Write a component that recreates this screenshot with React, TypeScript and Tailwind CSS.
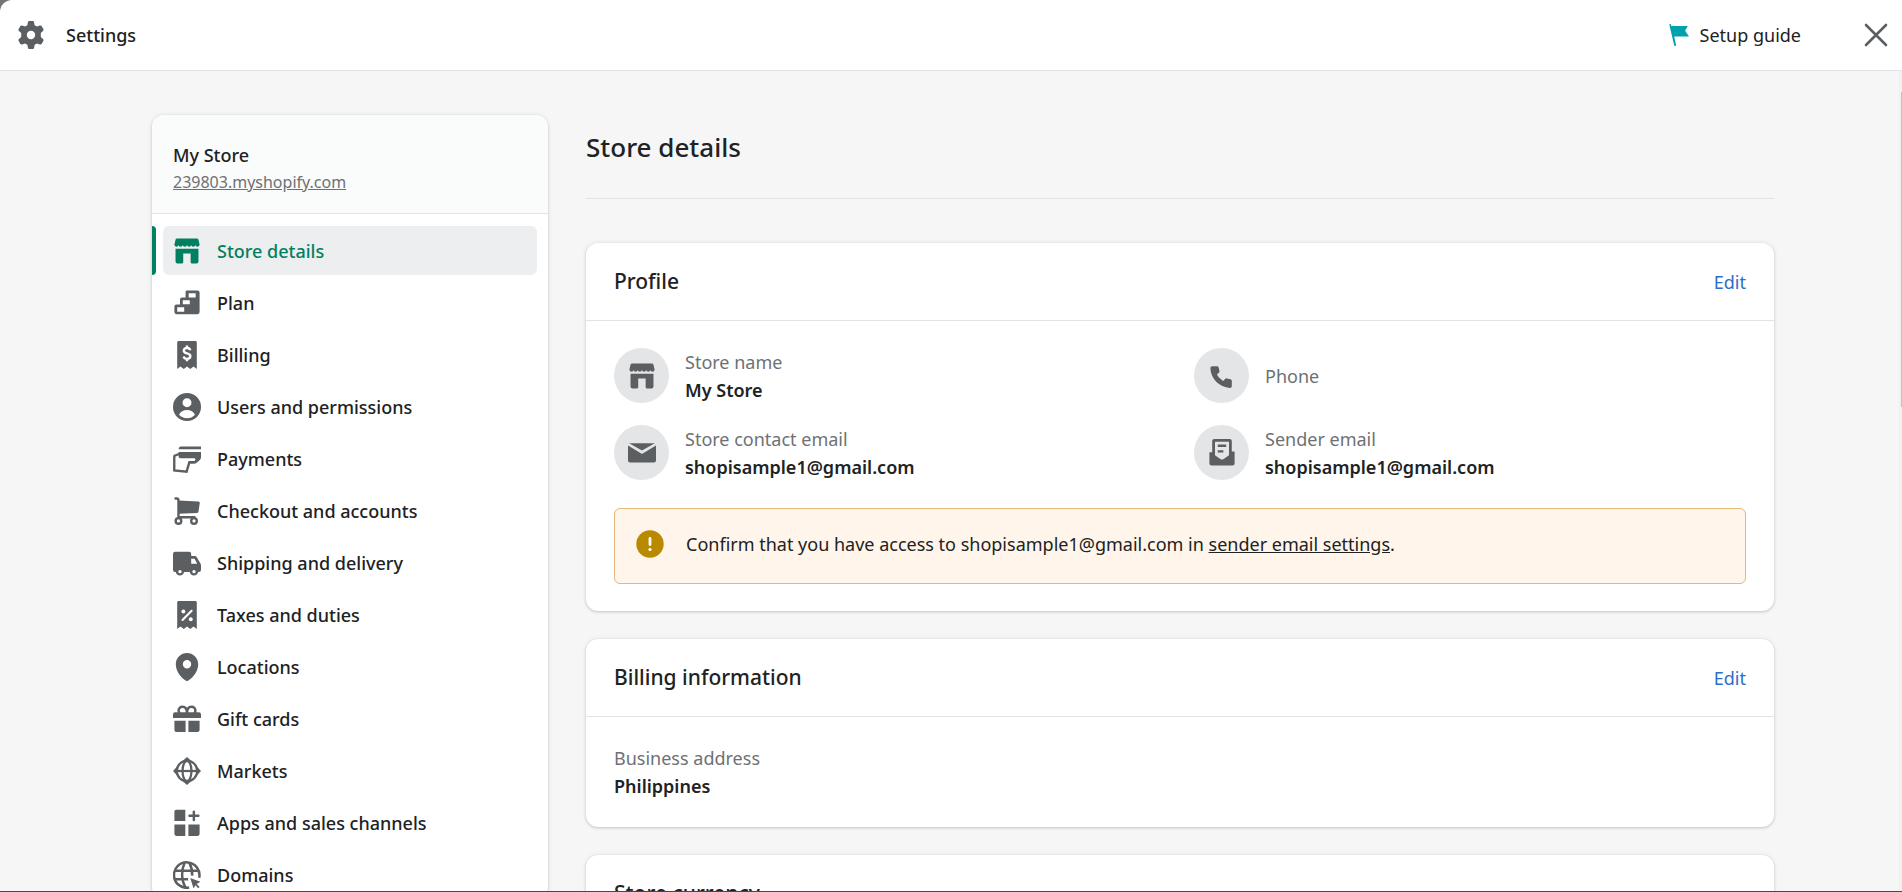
import type { ReactNode } from 'react'

const ICONS: Record<string, ReactNode> = {
  store: (
    <>
      <path d="M3 1h14a1.2 1.2 0 0 1 1.2 1L19 5.4c0 .9-.7 1.5-1.5 1.5S16 6.300 16 5.500c0 .8-.7 1.400-1.500 1.400S13 6.300 13 5.500c0 .8-.7 1.400-1.500 1.400S10 6.300 10 5.500c0 .8-.7 1.400-1.500 1.400S7 6.300 7 5.500c0 .8-.7 1.400-1.500 1.400S4 6.300 4 5.500c0 .8-.7 1.400-1.500 1.400S1 6.300 1 5.400L1.800 2A1.200 1.200 0 0 1 3 1z" />
      <path d="M1.800 8.400h16.400v9.100a1.400 1.400 0 0 1-1.400 1.400h-3.400a.8.800 0 0 1-.8-.8v-6.300H7.300v6.300a.8.800 0 0 1-.8.800H3.200a1.400 1.400 0 0 1-1.400-1.400z" />
    </>
  ),
  plan: (
    <path
      fillRule="evenodd"
      d="M10 1h7.500A1.500 1.500 0 0 1 19 2.500v14a1.500 1.500 0 0 1-1.500 1.500h-15A1.500 1.500 0 0 1 1 16.500v-4A1.500 1.500 0 0 1 2.500 11H5V7.500A1.500 1.500 0 0 1 6.500 6H9V2a1 1 0 0 1 1-1zm1.200 2v3h5V3zM7 8v2.900h5V8zm-4 5v3.200h5V13z"
    />
  ),
  billing: (
    <>
      <path d="M4 0h12a1 1 0 0 1 1 1v19l-2.300-1.800L12.300 20 10 18.200 7.700 20l-2.400-1.800L3 20V1a1 1 0 0 1 1-1z" />
      <path
        d="M12.300 6.600C12 5.500 11.100 5 10 5c-1.300 0-2.300.8-2.300 1.900 0 2.600 4.700 1.300 4.700 3.900 0 1.200-1 2-2.400 2-1.200 0-2.100-.6-2.400-1.700M10 3.300V5m0 7.800v1.700"
        fill="none"
        stroke="#fff"
        strokeWidth="1.700"
      />
    </>
  ),
  users: (
    <path
      fillRule="evenodd"
      d="M10 0a10 10 0 1 0 0 20 10 10 0 0 0 0-20zm0 3.700a3.200 3.200 0 1 1 0 6.400 3.200 3.200 0 0 1 0-6.400zM10 18c-2.300 0-4.300-1-5.700-2.500.9-2.100 3.100-3.300 5.700-3.300s4.800 1.200 5.700 3.300A7.700 7.700 0 0 1 10 18z"
    />
  ),
  payments: (
    <>
      <path d="M5.500 1H20v2H4c.1-1.100.7-2 1.500-2z" />
      <path d="M4 5h16v3.500c0 1-.4 1.900-1.200 2.500l-1.900 1.600c-.4.400-1 .6-1.600.6h-3v-1.800h2.500c.7 0 1.200-.5 1.200-1.100 0-.5-.5-.8-1.100-.8H5.500C4.600 9.500 4 8.900 4 8z" />
      <path d="M5 6.100L1.600 7.500a1 1 0 0 0-.7.900v9.700l8.800.9 2-6.700h3.600" fill="none" stroke="currentColor" strokeWidth="1.700" />
    </>
  ),
  checkout: (
    <>
      <path d="M4 2.500l14 .8c.8 0 1.200.5 1.100 1.200l-.9 6a1.200 1.200 0 0 1-1.100 1L4 12z" />
      <path
        d="M1.800 1.100h.8c.8 0 1.300.5 1.300 1.300v12.100h11.500"
        fill="none"
        stroke="currentColor"
        strokeWidth="1.700"
        strokeLinecap="round"
      />
      <circle cx="3.900" cy="17.100" r="2" fill="none" stroke="currentColor" strokeWidth="1.700" />
      <circle cx="15" cy="17.100" r="2" fill="none" stroke="currentColor" strokeWidth="1.700" />
    </>
  ),
  shipping: (
    <path
      fillRule="evenodd"
      d="M1.500 2h10A1.500 1.500 0 0 1 13 3.500V5h2.600c.5 0 1 .3 1.300.8l2.700 4.500c.3.500.4 1 .4 1.500V15a1.500 1.500 0 0 1-1.500 1.500h-.6a3 3 0 0 1-5.900 0H7.900a3 3 0 0 1-5.900 0h-.5A1.500 1.500 0 0 1 0 15V3.500A1.500 1.500 0 0 1 1.500 2zM13 7v3.500h4.300L15.400 7zM5 15a1.200 1.200 0 1 0 0 2.400A1.200 1.200 0 0 0 5 15zm10 0a1.200 1.200 0 1 0 0 2.400A1.200 1.200 0 0 0 15 15z"
    />
  ),
  taxes: (
    <>
      <path d="M4 0h12a1 1 0 0 1 1 1v19l-2.300-1.800L12.300 20 10 18.200 7.700 20l-2.400-1.800L3 20V1a1 1 0 0 1 1-1z" />
      <path d="M13.300 7l-6.500 6.500" stroke="#fff" strokeWidth="1.500" strokeLinecap="round" />
      <circle cx="7.400" cy="7.500" r="1.400" fill="#fff" />
      <circle cx="12.700" cy="13" r="1.400" fill="#fff" />
    </>
  ),
  locations: (
    <path
      fillRule="evenodd"
      d="M10 0C5.600 0 2 3.500 2 8c0 6.500 5.800 10.900 7.300 11.800.4.300 1 .3 1.400 0C12.200 18.900 18 14.500 18 8c0-4.500-3.600-8-8-8zm0 5a3 3 0 1 1 0 6 3 3 0 0 1 0-6z"
    />
  ),
  gift: (
    <>
      <path
        d="M10 5.800C10 3 8.800 1.200 6.800 1.200 5.200 1.200 4 2.400 4 4c0 .8.300 1.400.8 1.800M10 5.800c0-2.800 1.200-4.600 3.200-4.600 1.600 0 2.800 1.200 2.800 2.800 0 .8-.3 1.400-.8 1.800"
        fill="none"
        stroke="currentColor"
        strokeWidth="1.800"
      />
      <path d="M1.500 5.200h17A1.500 1.500 0 0 1 20 6.700v2.600H0V6.700a1.500 1.500 0 0 1 1.500-1.500zM1 11.200h8v8.100H2.500A1.500 1.500 0 0 1 1 17.800zM11 11.200h8v6.600a1.500 1.500 0 0 1-1.500 1.500H11z" />
    </>
  ),
  markets: (
    <>
      <g fill="none" stroke="currentColor" strokeWidth="1.600">
        <circle cx="10" cy="10" r="7.300" />
        <ellipse cx="10" cy="10" rx="3.200" ry="7.300" />
        <path d="M2 10h16" />
      </g>
      <path d="M10 0l3.600 3.300H6.400zM10 20l3.600-3.300H6.400zM0 10l3.300-3.600v7.200zM20 10l-3.300-3.600v7.200z" />
    </>
  ),
  apps: (
    <path d="M2.300.5H8.800v8.100H1V1.800A1.300 1.300 0 0 1 2.300.5zM1 11h7.800v8.200H2.300A1.300 1.300 0 0 1 1 17.900zM11 11h8v6.900a1.300 1.300 0 0 1-1.300 1.300H11zM14 1.900a.9.900 0 0 1 1.800 0V4h2.300a.9.900 0 0 1 0 1.800h-2.300v2.100a.9.900 0 0 1-1.800 0V5.800h-2.200a.9.900 0 0 1 0-1.800H14z" />
  ),
  domains: (
    <>
      <g fill="none" stroke="currentColor" strokeWidth="1.800">
        <path d="M18.700 12A9.100 9.100 0 1 0 11.500 19" />
        <path d="M1.500 7h17M1.500 13h9.300M8.300 1.200C6 6 5.600 13.500 9 18.900M11.700 1.200c1.500 3 2.200 6 2 9.300" />
      </g>
      <path d="M12.300 12.200l7.300 2.600-2.700 1.600 2.100 2.100-1 1-2-2.100-1.300 2.300z" />
    </>
  ),
  gear: (
    <path
      fillRule="evenodd"
      d="M8.900 0h2.200c.6 0 1 .4 1.100.9l.4 2.100 1.700 1 2-.7c.5-.2 1.100 0 1.400.5l1.100 1.900c.3.500.2 1.100-.2 1.400L17 8.600v2.800l1.600 1.500c.4.300.5.900.2 1.400l-1.100 1.900c-.3.500-.9.700-1.400.5l-2-.7-1.700 1-.4 2.100c-.1.500-.5.900-1.100.9H8.900c-.6 0-1-.4-1.100-.9L7.400 17l-1.700-1-2 .7c-.5.200-1.100 0-1.400-.5l-1.100-1.900c-.3-.5-.2-1.100.2-1.400L3 11.400V8.600L1.400 7.100c-.4-.3-.5-.9-.2-1.400l1.100-1.900c.3-.5.9-.7 1.400-.5l2 .7 1.700-1 .4-2.100C7.900.4 8.300 0 8.900 0zM10 7a3 3 0 1 0 0 6 3 3 0 0 0 0-6z"
    />
  ),
  mail: (
    <>
      <path d="M.8 3h18.400L10 8.300z" />
      <path d="M0 4.700l9.500 5.600c.3.200.7.200 1 0L20 4.700v10.600a1.500 1.500 0 0 1-1.500 1.500h-17A1.500 1.500 0 0 1 0 15.300z" />
    </>
  ),
  phone: (
    <path d="M3.100 3h3.300c.6 0 1.100.4 1.200 1l.6 2.500c.1.500 0 .9-.4 1.200L6.400 9c1 1.900 2.500 3.500 4.500 4.500l1.300-1.400c.3-.4.800-.5 1.200-.4l2.700.6c.5.100.9.600.9 1.200v3.900c0 .7-.6 1.200-1.300 1.100C7.900 18 1.900 12 1.700 4.300 1.700 3.600 2.400 3 3.100 3z" />
  ),
  inbox: (
    <path
      fillRule="evenodd"
      d="M4.500 0h11A1.500 1.500 0 0 1 17 1.500V9h2v8.500a1.500 1.500 0 0 1-1.500 1.500h-15A1.500 1.500 0 0 1 1 17.500V9.500h2v-8A1.500 1.500 0 0 1 4.500 0zM5 2v9.600l3.800 2.700c.7.500 1.700.5 2.400 0l3.800-2.700V2zm2 2h6v1.700H7zm0 4h4v1.700H7z"
    />
  ),
}

const NAV = [
  { icon: 'store', label: 'Store details', active: true },
  { icon: 'plan', label: 'Plan' },
  { icon: 'billing', label: 'Billing' },
  { icon: 'users', label: 'Users and permissions' },
  { icon: 'payments', label: 'Payments' },
  { icon: 'checkout', label: 'Checkout and accounts' },
  { icon: 'shipping', label: 'Shipping and delivery' },
  { icon: 'taxes', label: 'Taxes and duties' },
  { icon: 'locations', label: 'Locations' },
  { icon: 'gift', label: 'Gift cards' },
  { icon: 'markets', label: 'Markets' },
  { icon: 'apps', label: 'Apps and sales channels' },
  { icon: 'domains', label: 'Domains' },
]

const PROFILE = [
  { icon: 'store', label: 'Store name', value: 'My Store' },
  { icon: 'phone', label: 'Phone' },
  { icon: 'mail', label: 'Store contact email', value: 'shopisample1@gmail.com' },
  { icon: 'inbox', label: 'Sender email', value: 'shopisample1@gmail.com' },
]

const CARD = 'rounded-xl bg-white shadow-[0_0_5px_rgba(23,24,24,0.08),0_1px_3px_rgba(0,0,0,0.16)]'

function Icon({ name }: { name: string }) {
  return (
    <svg viewBox="0 0 20 20" fill="currentColor" className="size-7 shrink-0" aria-hidden="true">
      {ICONS[name]}
    </svg>
  )
}

function Card({ title, children }: { title: string; children?: ReactNode }) {
  return (
    <section className={CARD}>
      <div className="flex h-[78px] items-center justify-between border-b border-[#e1e3e5] px-7">
        <h2 className="text-[21px] font-medium">{title}</h2>
        <button type="button" className="text-[#2c6ecb]">Edit</button>
      </div>
      {children}
    </section>
  )
}

function Sidebar() {
  return (
    <aside className={`w-[396px] shrink-0 overflow-hidden ${CARD}`}>
      <div className="border-b border-[#e1e3e5] bg-[#fafbfb] px-[21px] pt-[26px] pb-[18px]">
        <div className="leading-7 font-medium">My Store</div>
        <a href="#store" className="block text-base leading-[26px] text-[#6d7175] underline">
          239803.myshopify.com
        </a>
      </div>
      <nav className="flex flex-col gap-[3px] pt-3">
        {NAV.map(({ icon, label, active }) => (
          <div key={label} className="relative px-[11px]">
            {active && <span className="absolute inset-y-0 left-0 w-1 rounded-r bg-[#008060]" />}
            <a
              href="#settings"
              className={`flex h-[49px] items-center gap-4 rounded-md px-[10px] font-medium ${
                active ? 'bg-[#edeeef] text-[#008060]' : 'text-[#5c5f62]'
              }`}
            >
              <Icon name={icon} />
              <span className={active ? '' : 'text-[#202223]'}>{label}</span>
            </a>
          </div>
        ))}
      </nav>
    </aside>
  )
}

export default function App() {
  return (
    <div className="relative flex h-screen flex-col overflow-hidden border-b border-[#4a4550] bg-[#757575] font-['Noto_Sans','Open_Sans',sans-serif] text-lg text-[#202223]">
      <header className="flex h-[71px] shrink-0 items-center rounded-tl-xl border-b border-[#e1e3e5] bg-white pr-3 pl-[17px]">
        <span className="text-[#5c5f62]">
          <Icon name="gear" />
        </span>
        <h1 className="ml-[21px] font-medium">Settings</h1>
        <button type="button" className="ml-auto flex items-center gap-[11px]">
          <svg viewBox="0 0 20 22" className="h-[22px] w-5" fill="#00a0ac" aria-hidden="true">
            <path d="M.3.600C.1 0 1.700-.3 1.900.500L2.200 2h16.600l-2.700 4.800 3.900 5.700H5.200l1.800 8.600c.1.900-1.600 1.200-1.800.4z" />
          </svg>
          Setup guide
        </button>
        <button type="button" aria-label="Close" className="ml-[61px] text-[#5c5f62]">
          <svg viewBox="0 0 28 28" className="size-7" stroke="currentColor" strokeWidth="2.600" strokeLinecap="round">
            <path d="M4 4l20 20M24 4L4 24" />
          </svg>
        </button>
      </header>

      <div className="flex min-h-0 flex-1 items-start gap-[38px] overflow-hidden bg-[#f6f6f7] pt-11 pr-32 pl-[152px]">
        <Sidebar />

        <main className="min-w-0 flex-1">
          <div className="border-b border-[#e1e3e5] pt-3 pb-[31px]">
            <h2 className="text-[26px] leading-10 font-medium">Store details</h2>
          </div>

          <div className="mt-11 flex flex-col gap-7">
            <Card title="Profile">
              <div className="px-7 py-[27px]">
                <dl className="grid grid-cols-2 gap-x-7 gap-y-[21px]">
                  {PROFILE.map(({ icon, label, value }) => (
                    <div key={label} className="flex items-start gap-4">
                      <div className="flex size-[55px] shrink-0 items-center justify-center rounded-full bg-[#e4e5e7] text-[#5c5f62]">
                        <Icon name={icon} />
                      </div>
                      <div className="self-center leading-7">
                        <dt className="text-[#6d7175]">{label}</dt>
                        {value && <dd className="font-semibold">{value}</dd>}
                      </div>
                    </div>
                  ))}
                </dl>
                <div className="mt-[27px] flex items-center gap-[22px] rounded-md border border-[#e1b878] bg-[#fff5ea] px-[21px] pt-[21px] pb-[25px]">
                  <svg viewBox="0 0 28 28" className="size-7 shrink-0" aria-hidden="true">
                    <circle cx="14" cy="14" r="13.700" fill="#b98900" />
                    <path d="M14 8.500v6" stroke="#fff" strokeWidth="2.800" strokeLinecap="round" />
                    <circle cx="14" cy="19.500" r="1.600" fill="#fff" />
                  </svg>
                  <p className="leading-7">
                    Confirm that you have access to shopisample1@gmail.com in{' '}
                    <a href="#sender" className="underline">sender email settings</a>.
                  </p>
                </div>
              </div>
            </Card>

            <Card title="Billing information">
              <dl className="px-7 py-[27px] leading-7">
                <dt className="text-[#6d7175]">Business address</dt>
                <dd className="font-semibold">Philippines</dd>
              </dl>
            </Card>

            <section className={`${CARD} px-7 py-6`}>
              <h2 className="text-[21px] leading-7 font-medium">Store currency</h2>
            </section>
          </div>
        </main>
      </div>

      {/* page scrollbar */}
      <div className="absolute top-[71px] right-0 bottom-0 w-[3px] bg-[#f1f1f1]">
        <div className="mt-[21px] ml-auto h-[315px] w-px bg-[#c1c1c1]" />
      </div>
    </div>
  )
}
